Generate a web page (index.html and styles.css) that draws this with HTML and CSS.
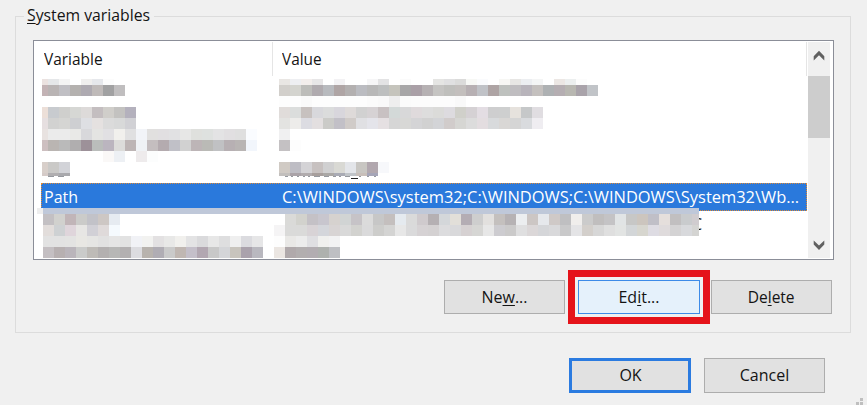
FILE: index.html
```html
<!DOCTYPE html>
<html lang="en">
<head>
<meta charset="utf-8">
<title>Environment Variables</title>
<link rel="stylesheet" href="styles.css">
</head>
<body>
<main class="dialog">
  <fieldset class="group">
    <legend><span class="t t-legend"><u>S</u>ystem variables</span></legend>
    <div class="list">
      <div class="table">
        <div class="row head"><div class="cell"><span class="t t-var">Variable</span></div><div class="cell"><span class="t t-val">Value</span></div></div>
        <div class="hidden-rows"></div>
        <div class="row selected"><div class="cell"><span class="t t-path">Path</span></div><div class="cell"><span class="t t-long">C:\WINDOWS\system32;C:\WINDOWS;C:\WINDOWS\System32\Wb...</span></div></div>
        <div class="row tail"><span class="t">C</span></div>
      </div>
      <div class="scrollbar">
        <svg class="arrow" viewBox="0 0 22 34"><path d="M5.700 14.200 11 8.800l5.300 5.400v4.200L11 13.200l-5.300 5.200z"/></svg>
        <div class="thumb"></div>
        <svg class="arrow down" viewBox="0 0 22 25"><path d="M5.700 7.400v4.200L11 17l5.300-5.400V7.400L11 12.600z"/></svg>
      </div>
      <svg class="mosaic" width="800" height="219" viewBox="33 40 800 219" shape-rendering="crispEdges"></svg>
    </div>
    <div class="actions">
      <button class="btn"><span class="t t-new">Ne<u>w</u>...</span></button>
      <div class="highlight"><button class="btn hot"><span class="t t-edit">Ed<u>i</u>t...</span></button></div>
      <button class="btn"><span class="t t-del">De<u>l</u>ete</span></button>
    </div>
  </fieldset>
  <div class="footer">
    <button class="btn primary"><span class="t t-ok">OK</span></button>
    <button class="btn cancel"><span class="t t-cancel">Cancel</span></button>
  </div>
  <svg class="grip" width="8" height="8" viewBox="0 0 8 8"><path d="M5 0h3v3H5zM5 4h3v3H5zM1 4h3v3H1z"/></svg>
</main>
<script src="mosaic.js"></script>
</body>
</html>
```
FILE: styles.css
```css
* { box-sizing: border-box; }
body { margin: 0; background: #f0f0f0; color: #141414; font: 16px/20px "Open Sans", "Noto Sans", sans-serif; }
.dialog { position: relative; width: 867px; height: 405px; overflow: hidden; padding: 6px 16px 0 15px; }
.group { width: 836px; height: 327px; margin: 0; padding: 0 17px 0 17px; border: 1px solid #dcdcdc; min-width: 0; }
legend { margin-left: -9px; width: 130px; height: 20px; padding: 0 0 0 3px; white-space: nowrap; line-height: 19px; }
.t { display: inline-block; white-space: nowrap; transform-origin: 0 50%; }
.t-legend { transform: scaleX(.985); }
.t-var { transform: scaleX(.965); }
.t-val { transform: scaleX(.96); }
.t-long { margin-left: -1px; transform: scaleX(1.027); }
.t-path { margin-left: -1px; }
u { text-decoration-thickness: 1px; text-underline-offset: 2px; }
.list { position: relative; display: flex; width: 801px; height: 220px; margin-top: 14px; padding: 1px 2px 1px 7px; border: 1px solid #8b8e98; background: #fff; }
.table { width: 766px; }
.row { display: grid; grid-template-columns: 232px 1fr; }
.head { height: 34px; border-right: 1px solid #e5e5e5; line-height: 34px; }
.head .cell:first-child { border-right: 1px solid #e5e5e5; }
.cell { padding-left: 3px; min-width: 0; }
.cell + .cell { padding-left: 9px; }
.hidden-rows { height: 107px; }
.selected { height: 28px; border: 1px dotted #df8a35; background: #2a79dc; color: #fff; line-height: 27px; }
.tail { display: block; padding-left: 651px; line-height: 27px; }
.scrollbar { width: 22px; margin-left: 1px; background: #f0f0f0; display: flex; flex-direction: column; }
.arrow { width: 22px; height: 34px; fill: #606060; }
.arrow.down { height: 25px; margin-top: auto; }
.thumb { height: 62px; background: #cdcdcd; }
.mosaic { position: absolute; left: -1px; top: -1px; }
.actions { display: flex; justify-content: flex-end; align-items: center; height: 54px; margin-top: 10px; padding-right: 1px; }
.btn { width: 121px; height: 34px; padding: 0 0 1px; border: 1px solid #adadad; background: #e1e1e1; color: inherit; font: inherit; text-align: center; }
.btn .t { transform-origin: 50% 50%; }
.t-new { margin-left: 0; }
.t-del { transform: scaleX(.97); }
.highlight { display: flex; width: 142px; height: 54px; margin: 0 1px 0 3px; padding: 3px; border: 7px solid #e5131a; }
.hot { width: 122px; height: 34px; border-color: #3d8be8; background: #e5f1fb; }
.footer { display: flex; justify-content: flex-end; gap: 13px; padding: 25px 26px 0 0; }
.primary, .cancel { height: 35px; padding-bottom: 2px; }
.primary { width: 122px; border: 3px solid #2b7be0; padding-left: 1px; }
.grip { position: absolute; left: 855px; top: 398px; fill: #bfbfbf; }
```
FILE: mosaic.js
```js
// Censored cells: [x, y, height, width of first cell, colours]; "-" leaves a gap.
const rows = [
  [42, 79, 6, 6, 'ebe2e0 e5e7e9 f4f4f4 - f0efee e6e8ec fcfcfc'],
  [42, 85, 11, 6, 'c3b3b5 b9b4b4 c0bfc4 b4b1af aeaab1 bfbab9 a1a1a2 c0bebf'],
  [42, 107, 11, 6, 'ecdfd8 c8cbcf cfcfcd d6d7d4 dddad9 c4bec0 d0ceca c3c2c0 b4b1bd'],
  [42, 118, 11, 6, 'e6dfe0 d2d2d1 d5d5d3 cecfd2 dedfe3 e5e1e0 dbdbdb d8d9d9 d1d1d5'],
  [42, 129, 11, 6, 'e8e2e0 ebebeb ebebeb e9e9e7 d8d8db e4e4e2 e1e0e3 f1f0ed e0e0e1 f2f4f8 e1e0df e1dfe1 e1e1e3 e7e7e6 dfe0dd dee1df e3e3e4 e1dfe1 dfdfdf fafcff'],
  [42, 140, 11, 6, 'cdbfc0 bab5b2 bababa b0aeaf 9d9199 babdbb bbb5bf dcdcda bdb5b5 eff2f5 c4bebf b4abaf c0c0c7 d1d1d1 bdb5b7 babab6 c0c1c3 b7b0b3 b9b5b4 f2f6fc'],
  [103, 151, 11, 11, 'faf8f7 edf0f4 - eeebec fcfdfd'],
  [42, 162, 11, 6, 'd8cfca cac9c7 d2d3d8'],
  [42, 173, 3, 6, 'd5cbc8 b0aeb0 a9a9ad'],
  [279, 79, 6, 11, 'e9e6e3 eeeff2 f3eeec e7e6e7 - f3f2f4 - - f6f6f7 e3e3e4 - fbfbfb - - e5e5e3 e0e0e1 dbdbda f7f8f5 fafbfd - f7f7f4 e7e6e4 eceef1 f4f5f5 - ece7e4 ecefef fcfcfc'],
  [279, 85, 11, 11, 'd2cfcb d4d4cf bdbdba b0abaf b8babe afa5a5 b3b0b0 bbbcc1 b8b8b8 bdbfbf c5c4bc a7a6a7 aaa0a7 b6b1b3 c5c4c2 bfbfbc c3bfbd b7b0b3 c0c2c7 aea4a4 bec1be bfbdc0 b8b4bb c4c0be aeb1b3 b5aeb2 b8b7b1 a9a3aa c1c4c8'],
  [279, 96, 11, 11, 'fdfdfd fdfdfd fafafa fdfdfd fdfdfd fdfdfd fdfdfd fdfdfd fbfbfb f9f9f9 eeeeee fbfbfb fcfcfc fcfcfc fcfcfc fcfcfc f9f9f9'],
  [279, 107, 11, 11, 'e0dcda dbdddc c7c1bf d8d8dc dbdcdc d8d6dc dedad9 d1d1d1 d6d2d4 c8c1c2 d3d9d8 d8d8d9 dfdadc dddddd dbdbd9 dddbdf d0d0ca d5d1d4 e3dde3 cececf cecfcf e6e2dd c6c8c9 e0dde1'],
  [279, 118, 11, 11, 'e3e3e1 edecea dcdce2 e3dfe0 cbcbc8 c2c0c7 d0cbc8 e0e0e3 e4e4ea e5e0e2 d6d6d6 d8d8d6 d4d4d6 d1d1d1 d3d4d7 d1cccb d6d6d3 dcdcdc e3dde0 d8dadc d9d7d5 d5d5d5 d9dbde efedf1'],
  [279, 129, 11, 11, 'f0f0f1'],
  [279, 140, 11, 11, 'c4c1c3 fdfdfd'],
  [279, 162, 11, 11, 'd0cac4 bebdc4 d4d3d6 c7c1c0 d0d0d1 d9d9d4 e3e5e9 c8c6c2 b1a7ae f7f8fb'],
  [279, 173, 3, 11, 'c2bfbd aaa3a8 b1acae a79f9d aaa8a6 a9abb5 c0c4c8 c8bfba a5a5b8'],
  [37, 208, 6, 6, 'eeeeee'],
  [43, 208, 6, 656, 'bfc8d9'],
  [43, 214, 11, 11, 'c3c0c3 d1d1ce c1b5b8 cbcbc9 c2c2c8 cdc7c4 e6ebf1'],
  [43, 225, 11, 11, 'e2dddb ced1d3 dfd5db e7e6e4 d1d0d6 dfdada f5fafe'],
  [43, 236, 11, 11, 'e2e2e2 e2e2e2 e3e3e2 e8e7e3 e5e5e3 e1e1e1 e5e5e5 e2e2e2 f1f2f6 f2f2f0 e3e1e2 e8e8e7 f1f0ed e3e3e4 dadadc e7e7e7 dededf efefef dbdbdf e6e6e7'],
  [43, 247, 11, 11, 'c4bfc2 b7b0b1 bab5bb cacbca bebbb7 b3b0b0 b7b7b6 b3b0b1 dcdce0 b8b3ae b0adb4 cacaca c0b7b2 c4bfc9 b2a7b1 c8c8c8 d4d5d8 c8c4bd aaa2ac b9b8bf'],
  [285, 214, 11, 11, 'dadad8 d2d2cd c4c1c6 c8c6ce d6d2cf d1d4d4 c6c3c7 dbdbdb c7c7c7 c4bfbe e5eaef dadada cfcacd b5b0b3 d4d7da e2dfd9 b4adb4 cecece e2e0de c4c0be b6b2b4 eceef0 ccc6c4 e6e8ec cfc9c7 bfbfc1 f0eeec cbcbcb c0bebe c4c3c5 e1e4e5 c7c7c6 ccc5be c0bfc7 e5dfdc c1bfc0 c9cbcd d0cccf'],
  [274, 225, 11, 11, 'f5f4f5 dadad9 dadad9 d8d3d6 d4d6db d8d4d4 d9d9d9 d2d2cf dadadb cdcdcb d4d4d3 e7e7e7 dadadb d6d2d4 d4d1d2 dcdcde d9d9db d6d1d2 d6d6d4 e7e7e7 cdccd0 cbcaca dfdfe0 dbd7d8 d5d6d9 d9d9db c9c9ca e4e4e6 d3cfcb d7d7d7 dfdfdf e2e4e3 d3d6d8 d7d6cf dedce3 dfdbdc d4d3d4 d8d9dc d4d4d2'],
  [274, 236, 11, 11, 'fdfdfd e9e8e6 ececec dfdfe2 f0f0ee f2f2f3'],
  [274, 247, 11, 11, 'ebe6e2 b0a9ab b2aeaf b2adb1 aeb1ae bebfc3']
];
const svg = document.querySelector('.mosaic');
function rect(x, y, w, h, fill) {
  const r = document.createElementNS('http://www.w3.org/2000/svg', 'rect');
  Object.entries({ x, y, width: w, height: h, fill }).forEach(([k, v]) => r.setAttribute(k, v));
  svg.append(r);
}
for (const [x0, y, h, first, colours] of rows) {
  let x = x0;
  colours.split(' ').forEach((c, i) => {
    const w = i ? 11 : first;
    const limit = y >= 208 && x0 > 43 ? 699 : 900;
    if (c !== '-') rect(x, y, Math.min(w, limit - x), h, '#' + c);
    x += w;
  });
}
// Letter bottoms left visible below the censored strip.
[[48, 6], [58, 6], [285, 3], [291, 2], [297, 2], [303, 2], [308, 2], [314, 6], [324, 5], [333, 3], [339, 2], [345, 5], [359, 2], [367, 2], [374, 2]]
  .forEach(([x, w]) => rect(x, 176, w, 1, '#96999f'));
rect(351, 178, 7, 1, '#222');
```
